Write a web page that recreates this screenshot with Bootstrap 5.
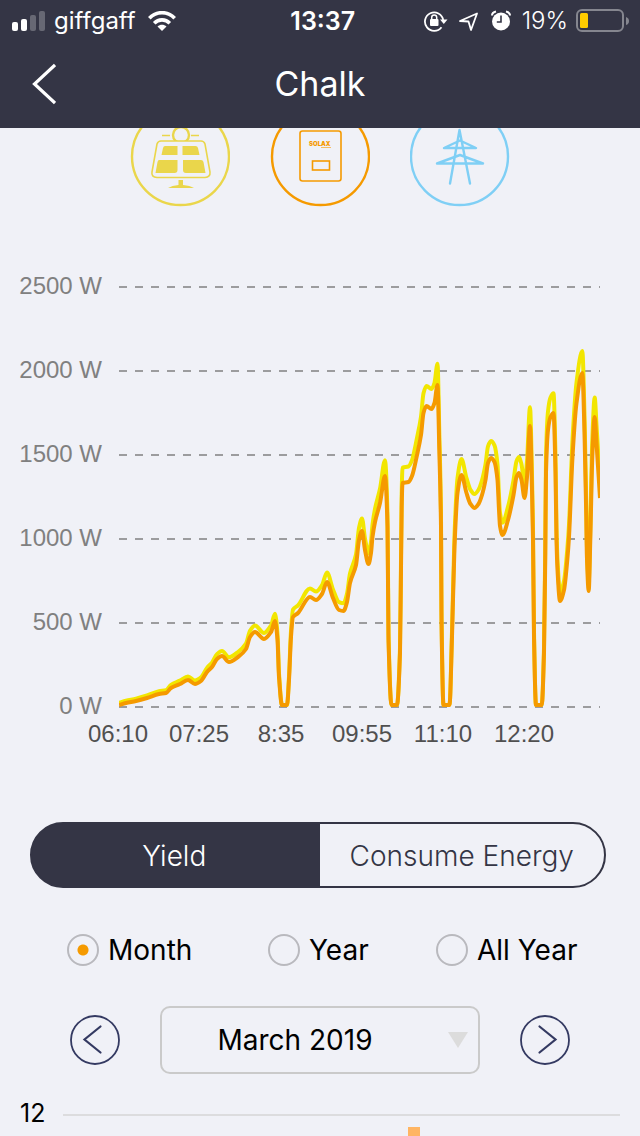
<!DOCTYPE html>
<html lang="en">
<head>
<meta charset="utf-8">
<meta name="viewport" content="width=device-width, initial-scale=1">
<title>Chalk</title>
<link rel="stylesheet" href="https://cdn.jsdelivr.net/npm/bootstrap@5.3.0/dist/css/bootstrap.min.css">
<style>
:root { --ink: #343545; --ground: #f0f1f7; --amber: #f59a00; }
body { background: var(--ground); color: #000; font-family: Inter, "Liberation Sans", sans-serif; font-size: 28px; line-height: 32px; }
svg { display: block; }
.top-area { background: var(--ink); color: #fff; }
.status-line { height: 40px; padding: 2px 11px 0 12px; font-size: 24px; }
.status-line > * { flex: 1 1 0; }
.status-line .clock { font-size: 25px; padding-left: 8px; }
.status-line .carrier { gap: 8px; }
.status-line .charge { margin: 0 8px 0 10px; }
.title-line { height: 88px; display: grid; grid-template-columns: 88px 1fr 88px; align-items: center; }
.title-line h1 { font-size: 34px; line-height: 40px; font-weight: 400; }
.back-link { width: 88px; padding-left: 32px; }
.sources { gap: 40px; }
.sources svg { width: 100px; height: 80px; }
.chart text { font-family: "Liberation Sans", sans-serif; font-size: 24px; }
.y-labels { fill: #808080; text-anchor: end; }
.x-labels { fill: #505050; text-anchor: middle; }
.switch-pair { margin: 54px 34px 0 30px; }
.switch-pair .btn { --bs-btn-font-size: 28px; --bs-btn-font-weight: 300; --bs-btn-line-height: 32px; --bs-btn-color: var(--ink); --bs-btn-border-color: var(--ink); --bs-btn-border-width: 2px; --bs-btn-padding-x: 0; --bs-btn-active-bg: var(--ink); --bs-btn-active-border-color: var(--ink); --bs-btn-active-color: #fff; --bs-btn-border-radius: 33px; flex: 1 1 0; padding-top: 16px; padding-bottom: 14px; }
.periods { display: grid; grid-template-columns: 201fr 168fr 204fr; margin: 46px 0 0 67px; }
.periods label { gap: 9px; }
.periods .form-check-input { width: 32px; height: 32px; margin: 0; background-color: transparent; border: 2px solid #b9b9be; }
.periods .form-check-input:checked { background-image: radial-gradient(circle, var(--amber) 5px, transparent 6px); }
.date-row { margin: 40px 70px 0; gap: 40px; }
.date-row button { width: 50px; height: 50px; }
.date-row .form-select { height: 68px; border: 2px solid #cacaca; border-radius: 10px; padding: 0 50px 0 0; font-size: 28px; line-height: 32px; color: #000; text-align: center; text-align-last: center; background-color: transparent; background-position: right 10px center; background-size: 20px 16px;
  background-image: url("data:image/svg+xml,%3Csvg xmlns='http://www.w3.org/2000/svg' viewBox='0 0 20 16'%3E%3Cpath fill='%23dcdcdc' d='M0 0h20L10 16z'/%3E%3C/svg%3E"); }
.yield-chart text { font-size: 25px; }
</style>
</head>
<body>
<header class="top-area">
  <div class="status-line d-flex align-items-center">
    <div class="carrier d-flex align-items-center">
      <svg width="34" height="20" viewBox="0 0 34 20" fill="#fff" aria-hidden="true"><rect y="11" width="6" height="9" rx="2"/><rect x="9" y="8" width="6" height="12" rx="2"/><g opacity=".25"><rect x="18" y="4" width="6" height="16" rx="2"/><rect x="27" width="6" height="20" rx="2"/></g></svg>
      <span>giffgaff</span>
      <svg class="ms-1" width="28" height="20" viewBox="0 0 28 20" aria-hidden="true"><g fill="none" stroke="#fff" stroke-width="3.6"><path d="M1.3 7.2C8.400-.2 19.600-.2 26.700 7.200"/><path d="M6.200 12.200C10.500 7.800 17.500 7.800 21.800 12.200"/></g><path fill="#fff" d="M9.500 15.500C12 13.200 16 13.200 18.500 15.500L14 20z"/></svg>
    </div>
    <div class="clock text-center fw-semibold">13:37</div>
    <div class="d-flex align-items-center justify-content-end">
      <svg width="24" height="22" viewBox="0 0 24 22" aria-hidden="true"><path d="M17.500 17.200A9.200 9.200 0 1 1 19.200 10" fill="none" stroke="#fff" stroke-width="1.800"/><path d="M16 9.500h7.500L19.800 14z" fill="#fff"/><rect x="6" y="9" width="8.500" height="7" rx="1" fill="#fff"/><path d="M7.700 9V7.500a2.500 2.500 0 0 1 5 0V9" fill="none" stroke="#fff" stroke-width="1.500"/></svg>
      <svg class="ms-2" width="24" height="22" viewBox="0 0 24 22" aria-hidden="true"><path d="M4 11L21 3.500 15 20l-2.500-8.500z" fill="none" stroke="#fff" stroke-width="1.800" stroke-linejoin="round"/></svg>
      <svg class="ms-2" width="24" height="22" viewBox="0 0 24 22" aria-hidden="true"><circle cx="13" cy="11.500" r="9" fill="#fff"/><path d="M13 5.500v6.500H8.800" fill="none" stroke="#343545" stroke-width="1.600"/><path d="M4 5.500q0-3 4-4M22 5.500q0-3-4-4" fill="none" stroke="#fff" stroke-width="2"/></svg>
      <span class="charge fw-light">19%</span>
      <svg width="53" height="24" viewBox="0 0 53 24" aria-hidden="true"><rect x="1" y="1" width="46" height="21" rx="5" fill="none" stroke="#85868f" stroke-width="2"/><path d="M50 8q3 1 3 4t-3 4z" fill="#85868f"/><rect x="4" y="4" width="8" height="15" rx="1.500" fill="#fc0"/></svg>
    </div>
  </div>
  <div class="title-line">
    <a class="back-link" href="#" aria-label="Back"><svg width="24" height="42" viewBox="0 0 24 42"><path d="M23 2L2.500 21 23 40" fill="none" stroke="#fff" stroke-width="3.200"/></svg></a>
    <h1 class="m-0 text-center">Chalk</h1>
  </div>
</header>
<main>
  <div class="sources d-flex justify-content-center">
    <svg viewBox="130 128 100 80" role="img" aria-label="Solar panel" fill="none" stroke="#ead64b" stroke-width="2.400">
      <circle cx="180.500" cy="156.500" r="48.500"/><circle cx="181" cy="135" r="8"/><path stroke-width="1.600" d="M162 135.500h8M191 135.500h8"/>
      <path fill="#f0f1f7" stroke-width="1.600" d="M161 141h40q3 0 4 3l5 28q.500 5-5 5.500h-48q-6-.500-5-5.500l5-28q1-3 4-3z"/>
      <path fill="#ead64b" stroke="none" d="M165 146h12.500v9h-16l1.500-7q.500-2 2-2zM182.500 146h13q2 0 2.500 2l1.500 7h-17zM159 160h18.500v10q0 3-3 3h-19l2-11q.500-2 1.500-2zM183 160h18q2 0 2.500 2l2 11h-19.500q-3 0-3-3zM178.500 180h4.500v5q7 .500 11 3h-26q4-2.500 10.500-3z"/>
    </svg>
    <svg viewBox="270 128 100 80" role="img" aria-label="Inverter" fill="none" stroke="#f59a00" stroke-width="1.600">
      <circle cx="320.500" cy="156.500" r="48.500" stroke-width="2.400"/><rect x="300" y="131" width="41" height="50" rx="2.500"/><rect x="312.500" y="161" width="17" height="9"/>
      <text x="309" y="146" fill="#f59a00" stroke="none" font-size="6" font-weight="900" font-family="Inter, sans-serif">SOLAX</text><path stroke-width="1" d="M321 147.500h10" opacity=".6"/>
    </svg>
    <svg viewBox="410 128 100 80" role="img" aria-label="Grid" fill="none" stroke="#7fcff5" stroke-width="2.400" stroke-linejoin="round">
      <circle cx="459.500" cy="156.500" r="48.500"/><path stroke-linecap="round" d="M450 183.500L459.500 130l10.500 53.500M444 148l16-7.500 16 7.500zM437 163.500l23-8.500 23 8.500z"/>
    </svg>
  </div>

  <svg class="chart w-100" viewBox="0 208 640 560" role="img" aria-label="Power today">
    <path d="M119 287H600M119 371H600M119 455H600M119 539H600M119 623H600M119 707H600" stroke="#9c9c9e" stroke-width="2" stroke-dasharray="8 8"/>
    <g class="y-labels"><text x="102" y="294">2500 W</text><text x="102" y="378">2000 W</text><text x="102" y="462">1500 W</text><text x="102" y="546">1000 W</text><text x="102" y="630">500 W</text><text x="102" y="714">0 W</text></g>
    <g class="x-labels"><text x="118" y="742">06:10</text><text x="199" y="742">07:25</text><text x="281" y="742">8:35</text><text x="362" y="742">09:55</text><text x="443" y="742">11:10</text><text x="524" y="742">12:20</text></g>
    <clipPath id="plot"><rect x="119" y="270" width="481" height="440"/></clipPath>
    <g clip-path="url(#plot)" fill="none" stroke-width="4" stroke-linejoin="round"><path id="panel-line" stroke="#f2e600"/><path id="output-line" stroke="#f59a00"/></g>
  </svg>

  <div class="switch-pair btn-group d-flex" role="group" aria-label="Energy type">
    <button type="button" class="btn active" aria-pressed="true">Yield</button>
    <button type="button" class="btn" aria-pressed="false">Consume Energy</button>
  </div>

  <div class="periods">
    <label class="d-flex align-items-center" for="p-month"><input class="form-check-input" type="radio" name="period" id="p-month" checked><span>Month</span></label>
    <label class="d-flex align-items-center" for="p-year"><input class="form-check-input" type="radio" name="period" id="p-year"><span>Year</span></label>
    <label class="d-flex align-items-center" for="p-all"><input class="form-check-input" type="radio" name="period" id="p-all"><span>All Year</span></label>
  </div>

  <div class="date-row d-flex align-items-center">
    <button type="button" class="btn p-0 border-0 flex-shrink-0" aria-label="Previous month"><svg width="50" height="50" viewBox="0 0 50 50" fill="none" stroke="#343a62" stroke-width="1.800" stroke-linecap="round"><circle cx="25" cy="25" r="24"/><path stroke-width="2.200" d="M30.500 11.500L14.500 24.500l16 13"/></svg></button>
    <select class="form-select flex-fill" aria-label="Month"><option>March 2019</option></select>
    <button type="button" class="btn p-0 border-0 flex-shrink-0" aria-label="Next month"><svg width="50" height="50" viewBox="0 0 50 50" fill="none" stroke="#343a62" stroke-width="1.800" stroke-linecap="round"><circle cx="25" cy="25" r="24"/><path stroke-width="2.200" d="M19.500 11.500l16 13-16 13"/></svg></button>
  </div>

  <svg class="yield-chart w-100" viewBox="0 1074 640 62" role="img" aria-label="Yield this month">
    <text x="20" y="1122">12</text><path d="M63 1115H620" stroke="#dcdcde" stroke-width="2"/><rect x="408" y="1127" width="12" height="9" fill="#ffb563"/>
  </svg>
</main>
<script>
// Plot points of the inverter output, as x, y pairs in chart units.
const output = [119,705,126,703,136,701,147,698,159,694,166,693,171,688,180,684,188,680,195,684,201,681,207,672,212,667,217,659,222,656,229,662,238,657,246,649,250,637,255,632,264,639,271,632,275,621,277.5,640,279,677,282,705,287,705,289,680,291,637,293,617,298,613,310,597,316,600,322,594,327,582,333,598,339,610,343.5,611,347,602,350,583,356,565,359,540,362,531,365,550,368.5,564,371,553,372.5,537,375,522,380,503,385,476,387.5,527,388.5,640,391.5,705,397,705,400,653,401,570,401.7,507,402.5,483,408.5,482,412,476,417,455,421,435,423.5,413,426.5,406,431.5,409,434.5,403,437.5,385,439.3,450,441,527,441.5,620,443.5,705,449.5,705,452,637,454.5,547,457.5,493,461.5,475,466.5,493,470.5,504,474.5,508,478.5,504,482,495,485.5,480,488,463,491,458,494.5,462,497.5,480,499,510,500,526,502.5,535,508,520,513.5,495,516.5,477,519,473,521.5,480,524.5,498,527,477,530,426,532,490,533,540,534,637,536,705,541.7,705,544,653,545.3,553,546,473,548,430,550.5,417,553.5,413,555.5,473,556.5,540,557.5,570,560,601,564,590,567.3,560,569,537,572.5,457,576.5,403,582.3,373,584.5,433,586.3,517,586.8,553,588.7,591,590.3,540,592.3,457,594.7,417,596.5,443,600,498];
const pairs = [];
for (let i = 0; i < output.length; i += 2) pairs.push([output[i], output[i + 1]]);
// Panel power is the output plus conversion losses.
const panels = pairs.map(([x, y]) => [x, x > 119 && y > 704 ? y : y - (707 - y) * 0.06 - 2]);

// Monotone cubic through the points, so that peaks do not overshoot.
function curve(p) {
  const s = p.slice(1).map((q, i) => (q[1] - p[i][1]) / (q[0] - p[i][0]));
  const m = p.map((_, i) => i === 0 ? s[0] : i === p.length - 1 ? s[i - 1] : s[i - 1] * s[i] <= 0 ? 0 : 2 * s[i - 1] * s[i] / (s[i - 1] + s[i]));
  let d = "M" + p[0];
  for (let i = 1; i < p.length; i++) {
    const h = (p[i][0] - p[i - 1][0]) / 3;
    d += "C" + [p[i - 1][0] + h, p[i - 1][1] + m[i - 1] * h, p[i][0] - h, p[i][1] - m[i] * h, p[i][0], p[i][1]].join(" ");
  }
  return d;
}
document.getElementById("panel-line").setAttribute("d", curve(panels));
document.getElementById("output-line").setAttribute("d", curve(pairs));
</script>
<script src="https://cdn.jsdelivr.net/npm/bootstrap@5.3.0/dist/js/bootstrap.bundle.min.js"></script>
</body>
</html>
